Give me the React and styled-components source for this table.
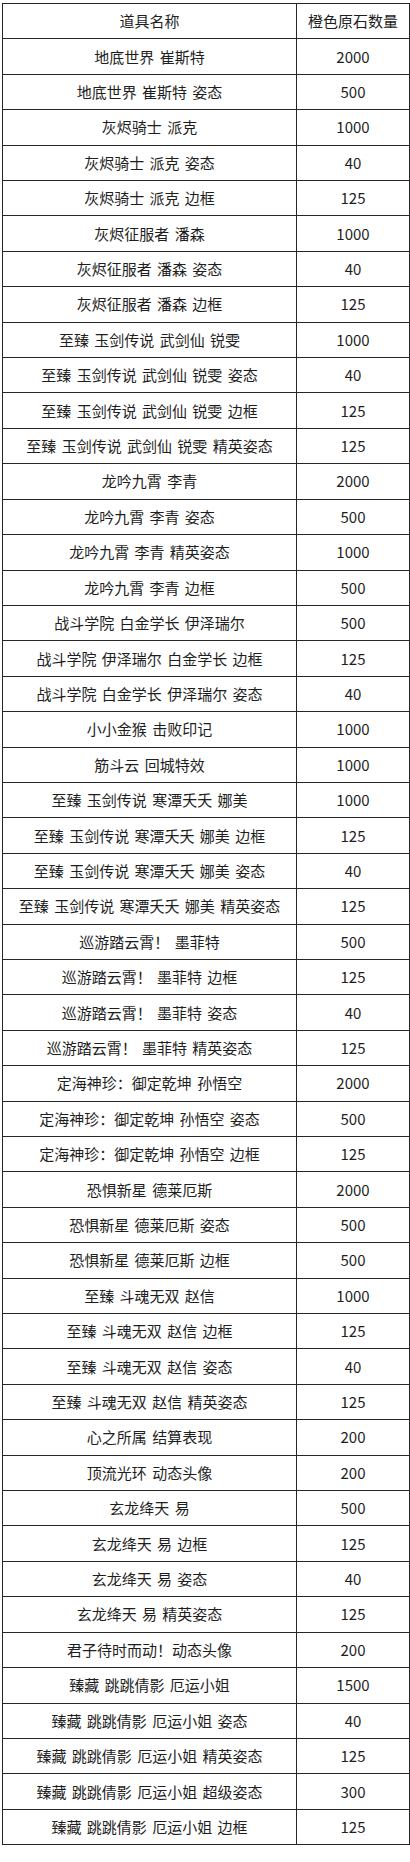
import React from 'react';
import styled, { createGlobalStyle } from 'styled-components';

const GlobalStyle = createGlobalStyle`
  html, body {
    margin: 0;
    padding: 0;
    background: #ffffff;
  }
  body {
    font-family: "Noto Sans CJK SC", "Noto Sans", sans-serif;
  }
`;

const rows = [
  ['地底世界 崔斯特', 2000],
  ['地底世界 崔斯特 姿态', 500],
  ['灰烬骑士 派克', 1000],
  ['灰烬骑士 派克 姿态', 40],
  ['灰烬骑士 派克 边框', 125],
  ['灰烬征服者 潘森', 1000],
  ['灰烬征服者 潘森 姿态', 40],
  ['灰烬征服者 潘森 边框', 125],
  ['至臻 玉剑传说 武剑仙 锐雯', 1000],
  ['至臻 玉剑传说 武剑仙 锐雯 姿态', 40],
  ['至臻 玉剑传说 武剑仙 锐雯 边框', 125],
  ['至臻 玉剑传说 武剑仙 锐雯 精英姿态', 125],
  ['龙吟九霄 李青', 2000],
  ['龙吟九霄 李青 姿态', 500],
  ['龙吟九霄 李青 精英姿态', 1000],
  ['龙吟九霄 李青 边框', 500],
  ['战斗学院 白金学长 伊泽瑞尔', 500],
  ['战斗学院 伊泽瑞尔 白金学长 边框', 125],
  ['战斗学院 白金学长 伊泽瑞尔 姿态', 40],
  ['小小金猴 击败印记', 1000],
  ['筋斗云 回城特效', 1000],
  ['至臻 玉剑传说 寒潭夭夭 娜美', 1000],
  ['至臻 玉剑传说 寒潭夭夭 娜美 边框', 125],
  ['至臻 玉剑传说 寒潭夭夭 娜美 姿态', 40],
  ['至臻 玉剑传说 寒潭夭夭 娜美 精英姿态', 125],
  ['巡游踏云霄！ 墨菲特', 500],
  ['巡游踏云霄！ 墨菲特 边框', 125],
  ['巡游踏云霄！ 墨菲特 姿态', 40],
  ['巡游踏云霄！ 墨菲特 精英姿态', 125],
  ['定海神珍：御定乾坤 孙悟空', 2000],
  ['定海神珍：御定乾坤 孙悟空 姿态', 500],
  ['定海神珍：御定乾坤 孙悟空 边框', 125],
  ['恐惧新星 德莱厄斯', 2000],
  ['恐惧新星 德莱厄斯 姿态', 500],
  ['恐惧新星 德莱厄斯 边框', 500],
  ['至臻 斗魂无双 赵信', 1000],
  ['至臻 斗魂无双 赵信 边框', 125],
  ['至臻 斗魂无双 赵信 姿态', 40],
  ['至臻 斗魂无双 赵信 精英姿态', 125],
  ['心之所属 结算表现', 200],
  ['顶流光环 动态头像', 200],
  ['玄龙绛天 易', 500],
  ['玄龙绛天 易 边框', 125],
  ['玄龙绛天 易 姿态', 40],
  ['玄龙绛天 易 精英姿态', 125],
  ['君子待时而动！动态头像', 200],
  ['臻藏 跳跳倩影 厄运小姐', 1500],
  ['臻藏 跳跳倩影 厄运小姐 姿态', 40],
  ['臻藏 跳跳倩影 厄运小姐 精英姿态', 125],
  ['臻藏 跳跳倩影 厄运小姐 超级姿态', 300],
  ['臻藏 跳跳倩影 厄运小姐 边框', 125],
];

const Page = styled.div`
  padding: 3px 3px 16px 2px;
`;

const Table = styled.table`
  width: 405px;
  border-collapse: collapse;
  table-layout: fixed;
  color: #1e1e1e;
  font-size: 15px;
`;

const Row = styled.tr`
  height: 35.42px;
`;

const Cell = styled.td`
  border: 1px solid #262626;
  padding: 0;
  text-align: center;
  vertical-align: middle;
  white-space: nowrap;
  word-spacing: 2px;
  line-height: 20px;
  width: ${(props) => props.w || 'auto'};
`;

export default function App() {
  return (
    <Page>
      <GlobalStyle />
      <Table>
        <tbody>
          <Row>
            <Cell w="293px">道具名称</Cell>
            <Cell w="112px">橙色原石数量</Cell>
          </Row>
          {rows.map(([name, count], i) => (
            <Row key={i}>
              <Cell>{name}</Cell>
              <Cell>{count}</Cell>
            </Row>
          ))}
        </tbody>
      </Table>
    </Page>
  );
}
